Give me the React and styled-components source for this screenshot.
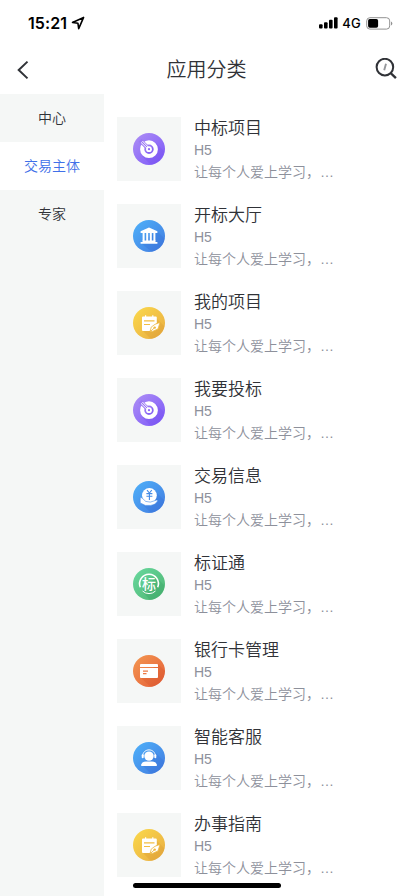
import React, { useState } from "react"
import styled, { createGlobalStyle } from "styled-components"

const categories = ["中心", "交易主体", "专家"]

const apps = [
  { title: "中标项目", icon: "target" },
  { title: "开标大厅", icon: "hall" },
  { title: "我的项目", icon: "note" },
  { title: "我要投标", icon: "target" },
  { title: "交易信息", icon: "trade" },
  { title: "标证通", icon: "cert" },
  { title: "银行卡管理", icon: "card" },
  { title: "智能客服", icon: "service" },
  { title: "办事指南", icon: "note" },
]

const colors = {
  target: ["#a98af5", "#805cf8"],
  hall: ["#4dacf7", "#4380e2"],
  note: ["#f9d54a", "#eab043"],
  trade: ["#4dacf7", "#4380e2"],
  cert: ["#66d59a", "#50b876"],
  card: ["#f2924e", "#e6633a"],
  service: ["#4dacf7", "#4380e2"],
}

const Mark = styled.text`
  fill: white;
  font: 500 14px "Noto Sans CJK SC", sans-serif;
`

const glyphs = {
  target: (
    <>
      <path d="M23 10L31 18A16 16 0 0 1 18 32L9 23Z" fill="#6840e8" opacity="0.2" />
      <circle cx="16" cy="16.2" r="6.8" fill="none" stroke="#fff" strokeWidth="4.2" />
      <path d="M7 7.2L14.6 14.8" stroke="#9b79f3" strokeWidth="4.2" />
      <circle cx="16" cy="16.2" r="2.9" fill="#fff" />
      <circle cx="16" cy="16.2" r="1.1" fill="#8d69f4" />
      <path d="M8 9.4L14 15.2M9.4 8L15.2 14" stroke="#fff" strokeWidth="1" />
    </>
  ),
  hall: (
    <>
      <path d="M24 11L32 19A16 16 0 0 1 19 32L8 23Z" fill="#2961ce" opacity="0.2" />
      <path d="M16 7.6L24.4 11.3V13H7.6V11.3Z" fill="#fff" />
      <path
        d="M10.6 13V21M14.2 13V21M17.8 13V21M21.4 13V21"
        stroke="#fff"
        strokeWidth="2"
      />
      <path d="M9.5 20.4H22.5V22H24.4V23.8H7.6V22H9.5Z" fill="#fff" />
    </>
  ),
  note: (
    <>
      <path d="M22 10L31.5 19.5A16 16 0 0 1 18 32L10 24Z" fill="#cf8525" opacity="0.2" />
      <path
        d="M10 9.4H12V8.2H13.2V9.4H19.2V8.2H20.4V9.4H22.8Q23.8 9.4 23.8 10.4V16L16.5 24H10Q9 24 9 23V10.4Q9 9.4 10 9.4Z"
        fill="#fff"
      />
      <path d="M11 13.9H21.5M11 17.5H17" stroke="#f2be42" strokeWidth="1.1" />
      <path
        d="M27 15.4L25 21.9L19.5 24.4L17.2 24.8L18.2 20.1L22 17.3Z"
        fill="#fff"
        stroke="#edb83f"
        strokeWidth="0.8"
      />
      <path d="M17.8 24.2L21.3 20.9" stroke="#edb83f" strokeWidth="0.9" />
      <circle cx="21.7" cy="20.6" r="1.2" fill="#edb83f" />
    </>
  ),
  trade: (
    <>
      <path d="M22 10L31.5 19.5A16 16 0 0 1 18 32L9 23Z" fill="#2961ce" opacity="0.2" />
      <circle cx="16.4" cy="14.4" r="7.4" fill="#fff" />
      <path
        d="M14 9.2L16.4 12L18.8 9.2M13.4 12.6H19.4M13.4 15.2H19.4M16.4 12V19"
        fill="none"
        stroke="#438be7"
        strokeWidth="1.1"
      />
      <path
        d="M7.2 16.6Q8.8 16.1 10.5 18.2L12.6 20.4L17.3 21.1L23.6 19.1Q25.6 19 24.2 20.6Q21.6 24.4 17.6 24.4H12.4L7.2 21.9Z"
        fill="#fff"
        stroke="#458be7"
        strokeWidth="0.6"
      />
    </>
  ),
  cert: (
    <>
      <path d="M23 9L31.5 17.5A16 16 0 0 1 17 32L9 23Z" fill="#2d985a" opacity="0.25" />
      <path
        d="M7.3 19.2A9.4 9.4 0 1 1 24.7 19.2"
        fill="none"
        stroke="#fff"
        strokeWidth="1.6"
      />
      <path d="M9.5 23A9.4 9.4 0 0 0 22.5 23" fill="none" stroke="#fff" strokeWidth="1" />
      <Mark x="16" y="21.4" textAnchor="middle">标</Mark>
    </>
  ),
  card: (
    <>
      <path d="M25 9L32 16A16 16 0 0 1 18 32L8 23Z" fill="#c9441f" opacity="0.2" />
      <path d="M8 9H24Q25 9 25 10V11.9H7V10Q7 9 8 9Z" fill="#fff" />
      <path d="M7 13H25V22Q25 23 24 23H8Q7 23 7 22Z" fill="#fff" />
      <path d="M10 16.2H15M10 18.6H13.5" stroke="#ed7942" strokeWidth="1.2" />
    </>
  ),
  service: (
    <>
      <path d="M22 10L31.5 19.5A16 16 0 0 1 18 32L9 23Z" fill="#2961ce" opacity="0.2" />
      <path
        d="M9.7 14.2C9.7 5.8 22.3 5.8 22.3 14.2"
        fill="none"
        stroke="#fff"
        strokeWidth="1"
      />
      <rect x="8.7" y="12.2" width="2" height="4" rx="1" fill="#fff" />
      <rect x="21.3" y="12.2" width="2" height="4" rx="1" fill="#fff" />
      <circle cx="16" cy="14.1" r="4.7" fill="#fff" />
      <path d="M8.2 24V22.5Q8.7 20.1 13 19.6H19Q23.3 20.1 23.8 22.5V24Z" fill="#fff" />
    </>
  ),
}

function AppIcon({ type, id }) {
  const [from, to] = colors[type]

  return (
    <svg width="32" height="32" viewBox="0 0 32 32">
      <defs>
        <linearGradient id={id} x1="0" y1="0" x2="1" y2="1">
          <stop offset="0.1" stopColor={from} />
          <stop offset="0.9" stopColor={to} />
        </linearGradient>
        <clipPath id={`${id}-clip`}>
          <circle cx="16" cy="16" r="16" />
        </clipPath>
      </defs>
      <circle cx="16" cy="16" r="16" fill={`url(#${id})`} />
      <g clipPath={`url(#${id}-clip)`}>{glyphs[type]}</g>
    </svg>
  )
}

function PhoneStatus() {
  return (
    <StatusBar>
      <StatusGroup>
        <Time>15:21</Time>
        <svg width="14" height="14" viewBox="0 0 14 14">
          <path
            d="M12.6 1.4L1.5 6.4L6.9 7.2L7.7 12.6Z"
            fill="none"
            stroke="#000"
            strokeWidth="1.6"
            strokeLinejoin="round"
          />
        </svg>
      </StatusGroup>
      <StatusGroup>
        <svg width="19" height="12" viewBox="0 0 19 12">
          <rect x="0" y="7.3" width="3.6" height="4.3" rx="1" />
          <rect x="5" y="5.3" width="3.6" height="6.3" rx="1" />
          <rect x="10" y="2.8" width="3.6" height="8.8" rx="1" />
          <rect x="15" y="0.2" width="3.6" height="11.4" rx="1" />
        </svg>
        <Network>4G</Network>
        <svg width="27" height="13" viewBox="0 0 27 13">
          <rect x="0.7" y="0.7" width="23" height="11.4" rx="3.2" fill="none" stroke="#929292" />
          <rect x="2.1" y="2.1" width="10" height="8.6" rx="1.7" />
          <path d="M25 4.5Q26.3 5.1 26.3 6.4T25 8.4Z" fill="#929292" />
        </svg>
      </StatusGroup>
    </StatusBar>
  )
}

export default function App() {
  const [active, setActive] = useState(1)

  return (
    <Screen>
      <GlobalStyle />
      <PhoneStatus />
      <Header>
        <IconButton aria-label="返回">
          <svg width="14" height="20" viewBox="0 0 14 20">
            <path d="M11.5 1.6L2.7 10L11.5 18.4" fill="none" stroke="#303237" strokeWidth="2" />
          </svg>
        </IconButton>
        <PageTitle>应用分类</PageTitle>
        <IconButton aria-label="搜索">
          <svg width="22" height="24" viewBox="0 0 22 24">
            <circle cx="9.9" cy="9.1" r="8.3" fill="none" stroke="#303237" strokeWidth="2" />
            <path d="M15.6 15L20.9 20.2" stroke="#303237" strokeWidth="2.4" />
            <path d="M11 5.8L9.2 12.2" stroke="#95979b" strokeWidth="1.9" />
          </svg>
        </IconButton>
      </Header>
      <Body>
        <Sidebar>
          {categories.map((name, i) => (
            <Category key={name} $active={active === i} onClick={() => setActive(i)}>
              {name}
            </Category>
          ))}
        </Sidebar>
        <List>
          {apps.map((app, i) => (
            <Item key={app.title}>
              <Thumb>
                <AppIcon type={app.icon} id={`app-${i}`} />
              </Thumb>
              <Info>
                <Name>{app.title}</Name>
                <Detail>H5</Detail>
                <Detail>让每个人爱上学习，…</Detail>
              </Info>
            </Item>
          ))}
        </List>
      </Body>
      <HomeIndicator />
    </Screen>
  )
}

const GlobalStyle = createGlobalStyle`
  * {
    box-sizing: border-box;
  }

  body {
    margin: 0;
    background: white;
    font-family: "Liberation Sans", "Noto Sans CJK SC", sans-serif;
    font-weight: 350;
  }
`

const Screen = styled.div`
  position: relative;
  display: flex;
  flex-direction: column;
  width: 414px;
  height: 896px;
  overflow: hidden;
  background: white;
`

const StatusBar = styled.div`
  display: flex;
  flex: none;
  justify-content: space-between;
  height: 46px;
  padding: 0 21px 0 28px;
  color: black;
`

const StatusGroup = styled.div`
  display: flex;
  align-items: center;
  gap: 4px;
`

const Time = styled.span`
  font: 600 16px/20px Inter, sans-serif;
  letter-spacing: 0.1px;
`

const Network = styled.span`
  margin-right: 1px;
  font: 500 13px/16px Inter, sans-serif;
  letter-spacing: 0.2px;
`

const Header = styled.header`
  display: flex;
  flex: none;
  align-items: center;
  justify-content: space-between;
  height: 48px;
  padding: 0 17px 0 16px;
`

const IconButton = styled.button`
  display: flex;
  padding: 0;
  border: 0;
  background: none;
  cursor: pointer;
`

const PageTitle = styled.h1`
  margin: 0;
  padding-left: 8px;
  color: #303237;
  font-size: 20px;
  font-weight: 350;
  line-height: 28px;
`

const Body = styled.div`
  display: flex;
  flex: 1;
  min-height: 0;
`

const Sidebar = styled.nav`
  flex: none;
  width: 104px;
  background: #f5f7f6;
`

const Category = styled.div`
  height: 48px;
  background: ${props => (props.$active ? "white" : "#f5f7f6")};
  color: ${props => (props.$active ? "#4070e8" : "#303237")};
  font-size: 14px;
  line-height: 48px;
  text-align: center;
  cursor: pointer;
`

const List = styled.main`
  display: flex;
  flex: 1;
  flex-direction: column;
  gap: 23px;
  padding: 23px 13px 0;
`

const Item = styled.div`
  display: flex;
  flex: none;
  gap: 13px;
  height: 64px;
`

const Thumb = styled.div`
  display: flex;
  flex: none;
  align-items: center;
  justify-content: center;
  width: 64px;
  height: 64px;
  background: #f5f7f6;
`

const Info = styled.div`
  display: flex;
  flex-direction: column;
  white-space: nowrap;
`

const Name = styled.div`
  height: 22px;
  color: #303237;
  font-size: 17px;
  line-height: 24px;
`

const Detail = styled.div`
  color: #8d909b;
  font-size: 14px;
  line-height: 22px;
`

const HomeIndicator = styled.div`
  position: absolute;
  bottom: 8px;
  left: 133px;
  width: 148px;
  height: 5px;
  border-radius: 3px;
  background: black;
`
